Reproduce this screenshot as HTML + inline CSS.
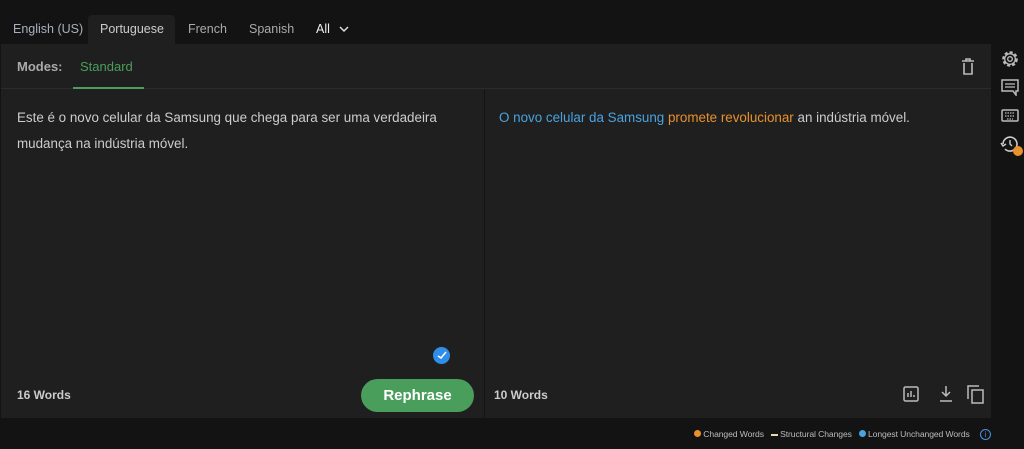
<!DOCTYPE html>
<html><head><meta charset="utf-8"><style>
*{margin:0;padding:0;box-sizing:border-box}
body{width:1024px;height:449px;background:#131313;font-family:"Liberation Sans",sans-serif;position:relative;overflow:hidden;color:#ddd}
.tab{position:absolute;top:15px;height:29px;line-height:29px;font-size:12.5px;color:#aab}
.panel{position:absolute;left:1px;top:44px;width:990px;height:374px;background:#1f1f1f}
.modes{position:absolute;left:0;top:0;width:990px;height:45px;border-bottom:1px solid #2c2c2c}
.t{position:absolute;font-size:13.4px;line-height:26px}
svg{position:absolute}
</style></head><body>
<div class="tab" style="left:13px;color:#a8b0bd">English (US)</div>
<div style="position:absolute;left:88px;top:15px;width:87px;height:30px;background:#1f1f1f;border-radius:4px 4px 0 0"></div>
<div class="tab" style="left:100px;color:#ccc">Portuguese</div>
<div class="tab" style="left:188px;color:#aaa">French</div>
<div class="tab" style="left:249px;color:#aaa">Spanish</div>
<div class="tab" style="left:316px;color:#eee">All</div>
<svg style="left:339px;top:25px" width="10" height="8"><path d="M1 2l4 4 4-4" stroke="#ddd" stroke-width="1.5" fill="none"/></svg>
<div class="panel">
 <div class="modes">
  <div style="position:absolute;left:16px;top:15px;font-size:13px;font-weight:bold;color:#aaa">Modes:</div>
  <div style="position:absolute;left:79px;top:15px;font-size:13px;color:#4a9e5c">Standard</div>
  <div style="position:absolute;left:72px;top:43px;width:71px;height:2px;background:#4a9e5c"></div>
  <svg style="left:960px;top:14px" width="14" height="17"><path d="M1 3h12M5 3V1h4v2M3 5v11h8V5" stroke="#bbb" stroke-width="1.6" fill="none"/></svg>
 </div>
 <div style="position:absolute;left:483px;top:46px;width:1px;height:328px;background:#141414"></div>
 <div class="t" style="left:16px;top:61px;width:450px;color:#ccc">Este é o novo celular da Samsung que chega para ser uma verdadeira mudança na indústria móvel.</div>
 <div class="t" style="left:498px;top:61px;color:#ccc;white-space:nowrap"><span style="color:#4aa3df">O novo celular da Samsung</span> <span style="color:#e8912d">promete revolucionar</span> an indústria móvel.</div>
 <div style="position:absolute;left:432px;top:303px;width:17px;height:17px;border-radius:50%;background:#2f8fe8"></div>
 <svg style="left:436px;top:307px" width="10" height="9"><path d="M1 5l3 2 5-6" stroke="#fff" stroke-width="1.5" fill="none"/></svg>
 <div style="position:absolute;left:16px;top:344px;font-size:12px;font-weight:bold;color:#ccc">16 Words</div>
 <div style="position:absolute;left:360px;top:335px;width:113px;height:33px;border-radius:17px;background:#4a9e5c;color:#fff;font-weight:bold;font-size:15px;text-align:center;line-height:33px">Rephrase</div>
 <div style="position:absolute;left:493px;top:344px;font-size:12px;font-weight:bold;color:#ccc">10 Words</div>
 <svg style="left:902px;top:342px" width="16" height="16"><rect x="1" y="1" width="14" height="14" rx="1.5" stroke="#bbb" stroke-width="1.5" fill="none"/><path d="M5 11V7M8 11V5M11 11V9" stroke="#bbb" stroke-width="1.5"/></svg>
 <svg style="left:937px;top:341px" width="16" height="18"><path d="M8 1v10M4 7l4 4 4-4M2 16h12" stroke="#bbb" stroke-width="1.5" fill="none"/></svg>
 <svg style="left:966px;top:341px" width="17" height="19"><path d="M1 14V1h11" stroke="#bbb" stroke-width="1.5" fill="none"/><rect x="5" y="5" width="11" height="13" stroke="#bbb" stroke-width="1.5" fill="none"/></svg>
</div>
<svg style="left:1000px;top:49px" width="20" height="20"><circle cx="10" cy="10" r="6.5" stroke="#bbb" stroke-width="2.6" fill="none" stroke-dasharray="3 2"/><circle cx="10" cy="10" r="5.3" stroke="#bbb" stroke-width="1.3" fill="none"/><circle cx="10" cy="10" r="2.3" stroke="#bbb" stroke-width="1.4" fill="none"/></svg>
<svg style="left:1001px;top:79px" width="18" height="17"><path d="M1 1h16v11h-2v4l-3-4H1z" stroke="#bbb" stroke-width="1.5" fill="none"/><path d="M4 5h10M4 8h10" stroke="#bbb" stroke-width="1.3"/></svg>
<svg style="left:1001px;top:109px" width="18" height="13"><rect x="1" y="1" width="16" height="11" rx="1" stroke="#bbb" stroke-width="1.5" fill="none"/><path d="M4 4h10M4 7h10M6 10h6" stroke="#bbb" stroke-width="1.2" stroke-dasharray="1.5 1"/></svg>
<svg style="left:1000px;top:136px" width="24" height="22"><path d="M3 8a7 7 0 1 1 2 5" stroke="#ccc" stroke-width="1.6" fill="none"/><path d="M1 7l2 3 3-2" stroke="#ccc" stroke-width="1.5" fill="none"/><path d="M10 4v4l2 2" stroke="#ccc" stroke-width="1.4" fill="none"/><circle cx="18" cy="15" r="5" fill="#e8912d"/></svg>
<div style="position:absolute;top:429px;left:694px;font-size:8.6px;color:#bbb;white-space:nowrap;letter-spacing:-0.1px">
<span style="display:inline-block;width:7px;height:7px;border-radius:50%;background:#e8912d"></span> Changed Words &nbsp;&nbsp;<span style="display:inline-block;width:7px;height:2px;background:#e8d9a8;vertical-align:middle"></span> Structural Changes &nbsp;&nbsp;<span style="display:inline-block;width:7px;height:7px;border-radius:50%;background:#4aa3df"></span> Longest Unchanged Words</div>
<div style="position:absolute;left:980px;top:429px;width:11px;height:11px;border:1px solid #4a8fdf;border-radius:50%;color:#4a8fdf;font-size:8px;text-align:center;line-height:9px">i</div>
</body></html>
